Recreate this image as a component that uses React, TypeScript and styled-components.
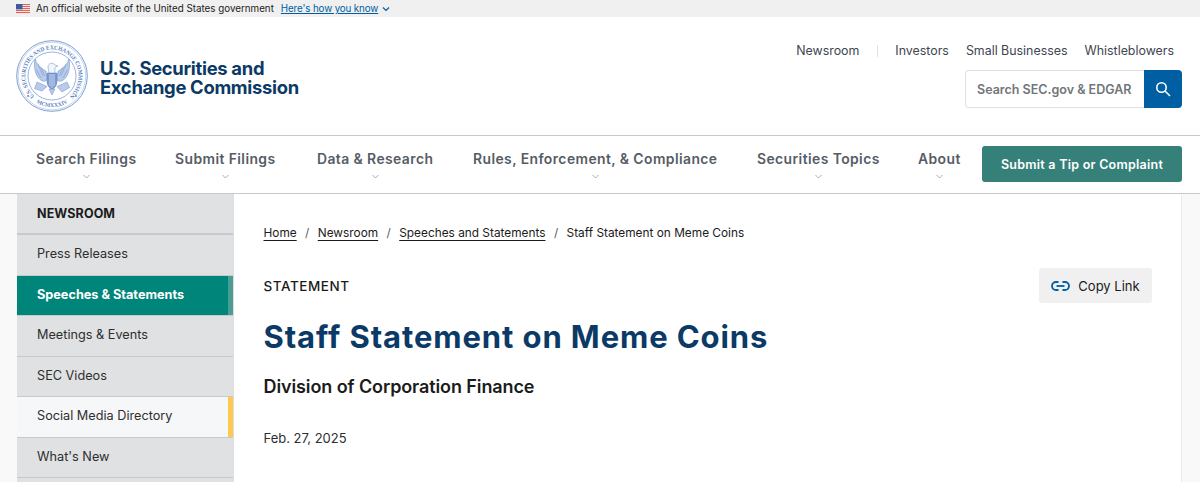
import React from "react";
import styled, { createGlobalStyle } from "styled-components";

const Global = createGlobalStyle`
  html, body { margin: 0; padding: 0; background: #fff; overflow: hidden; }
  body { font-family: Inter, "Liberation Sans", sans-serif; color: #1b1b1b; }
  a { color: inherit; }
`;

const Page = styled.div`
  width: 1200px;
  height: 482px;
  overflow: hidden;
`;

const Banner = styled.div`
  height: 17px;
  background: #f0f0f0;
  display: flex;
  align-items: center;
  padding-left: 16px;
  font-size: 9.8px;
  color: #1b1b1b;
`;
const BannerText = styled.span`
  margin-left: 6px;
`;
const BannerLink = styled.a`
  margin-left: 7px;
  color: #005ea2;
  letter-spacing: -0.13px;
  text-decoration: underline;
`;
const BannerChevron = styled.svg`
  margin-left: 4px;
  width: 8px;
  height: 6px;
`;

const Masthead = styled.header`
  height: 118px;
  display: flex;
  justify-content: space-between;
  border-bottom: 1px solid #c9c9c9;
`;
const Brand = styled.div`
  display: flex;
  align-items: center;
  padding-left: 16px;
  gap: 12px;
`;
const BrandName = styled.div`
  font-family: Inter, sans-serif;
  font-weight: 700;
  font-size: 18.4px;
  line-height: 19px;
  letter-spacing: -0.3px;
  color: #0b3a66;
  margin-top: 3px;
`;
const Utility = styled.div`
  display: flex;
  flex-direction: column;
  align-items: flex-end;
  padding: 26px 18px 0 0;
`;
const UtilityLinks = styled.nav`
  display: flex;
  align-items: center;
  padding-right: 8px;
  font-size: 12.4px;
  line-height: 16px;
  color: #3d4551;
`;
const UtilityLink = styled.span<{ $gap: number }>`
  margin-left: ${(p) => p.$gap}px;
`;
const Divider = styled.span`
  width: 1px;
  height: 12px;
  background: #dfe1e2;
  margin-left: 18px;
`;
const SearchBox = styled.div`
  margin-top: 11px;
  display: flex;
  height: 38px;
`;
const SearchField = styled.div`
  width: 179px;
  box-sizing: border-box;
  border: 1px solid #dfe1e2;
  border-right: 0;
  border-radius: 4px 0 0 4px;
  display: flex;
  align-items: center;
  padding-left: 11px;
  font-size: 12.5px;
  font-weight: 600;
  color: #71767a;
  white-space: nowrap;
`;
const SearchButton = styled.div`
  width: 38px;
  background: #005ea2;
  border-radius: 0 4px 4px 0;
  display: flex;
  align-items: center;
  justify-content: center;
`;

const MainNav = styled.nav`
  height: 57px;
  display: flex;
  align-items: flex-start;
  border-bottom: 1px solid #c9c9c9;
  padding-left: 36px;
`;
const NavItem = styled.div<{ $w: number }>`
  width: ${(p) => p.$w}px;
  flex: none;
  display: flex;
  flex-direction: column;
  align-items: flex-start;
  padding-top: 15px;
`;
const NavLabel = styled.div`
  display: flex;
  flex-direction: column;
  align-items: center;
  font-size: 13.9px;
  line-height: 17px;
  font-weight: 600;
  letter-spacing: 0.42px;
  color: #565c65;
  white-space: nowrap;
`;
const NavChevron = styled.svg`
  width: 7px;
  height: 5px;
  margin-top: 6px;
`;
const TipButton = styled.div`
  width: 200px;
  height: 36px;
  margin-top: 10px;
  margin-left: -1px;
  background: #36807a;
  border-radius: 3px;
  color: #fff;
  font-size: 12.5px;
  font-weight: 600;
  letter-spacing: 0.25px;
  display: flex;
  align-items: center;
  justify-content: center;
`;

const Body = styled.div`
  display: flex;
  height: 288px;
  background: #f9f9f9;
  padding: 0 18px 0 17px;
`;
const Sheet = styled.div`
  flex: 1;
  display: flex;
  background: #fff;
  border-right: 1px solid #ececec;
`;
const Sidebar = styled.aside`
  width: 216px;
  flex: none;
  background: #dfe1e2;
  border-right: 1px solid #dcdee0;
`;
const SideHead = styled.div`
  height: 39px;
  display: flex;
  align-items: center;
  padding-left: 20px;
  font-size: 12.5px;
  font-weight: 700;
  letter-spacing: 0.1px;
  color: #1b1b1b;
  border-bottom: 2px solid #c6cace;
`;
const SideItem = styled.div<{ $kind?: "active" | "hover" }>`
  height: 40.55px;
  box-sizing: border-box;
  display: flex;
  align-items: center;
  padding: 0 0 2px 20px;
  font-size: 12.7px;
  font-weight: ${(p) => (p.$kind === "active" ? 700 : 400)};
  color: ${(p) => (p.$kind === "active" ? "#fff" : "#2e2e2e")};
  background: ${(p) =>
    p.$kind === "active" ? "#00857a" : p.$kind === "hover" ? "#f6f7f9" : "#dfe1e2"};
  border-bottom: 1px solid #c6cace;
  box-shadow: ${(p) =>
    p.$kind === "active"
      ? "inset -5px 0 0 #4a9d92"
      : p.$kind === "hover"
        ? "inset -5px 0 0 #ffc94d"
        : "none"};
`;
const Content = styled.main`
  flex: 1;
  padding: 31px 29px 0 29.5px;
`;
const Crumbs = styled.div`
  display: flex;
  align-items: center;
  font-size: 11.85px;
  line-height: 17px;
  color: #1b1b1b;
`;
const CrumbLink = styled.a`
  text-decoration: underline;
  text-underline-offset: 3px;
`;
const Slash = styled.span`
  margin: 0 8.4px;
  color: #565c65;
`;
const TypeRow = styled.div`
  margin-top: 26px;
  display: flex;
  justify-content: space-between;
  align-items: center;
  height: 35px;
`;
const TypeLabel = styled.div`
  font-size: 13.5px;
  font-weight: 500;
  letter-spacing: 0.55px;
  color: #1b1b1b;
`;
const CopyLink = styled.div`
  width: 113px;
  height: 35px;
  background: #f0f0f0;
  border-radius: 3px;
  display: flex;
  align-items: center;
  justify-content: center;
  gap: 8px;
  font-size: 13px;
  color: #1b1b1b;
`;
const Title = styled.h1`
  margin: 16px 0 0;
  font-size: 31px;
  line-height: 36px;
  font-weight: 700;
  letter-spacing: 0.9px;
  color: #0b3a66;
`;
const Subtitle = styled.h2`
  margin: 21px 0 0;
  font-size: 18px;
  line-height: 22px;
  font-weight: 600;
  letter-spacing: -0.1px;
  color: #1b1b1b;
`;
const DateLine = styled.div`
  margin-top: 31px;
  font-size: 13px;
  line-height: 18px;
  color: #2e2e2e;
`;

const Flag = () => (
  <svg width="14" height="10" viewBox="0 0 14 10" aria-hidden>
    <rect width="14" height="10" fill="#f4f4f4" />
    {[0, 2, 4, 6, 8].map((y) => (
      <rect key={y} y={y} width="14" height="1.1" fill="#e0625a" />
    ))}
    <rect width="6.5" height="5.4" fill="#3f5a9c" />
  </svg>
);

const Seal = () => (
  <svg width="72" height="72" viewBox="0 0 72 72" aria-hidden>
    <defs>
      <path id="sealTop" d="M18.9 56.3 A26.5 26.5 0 1 1 53.1 56.3" />
      <path id="sealBottom" d="M20.5 62.8 A31 31 0 0 0 51.5 62.8" />
    </defs>
    <circle cx="36" cy="36" r="35.3" fill="#fff" stroke="#6f93cf" strokeWidth="0.9" />
    <circle cx="36" cy="36" r="33.8" fill="none" stroke="#8fabd9" strokeWidth="0.5" />
    <circle cx="36" cy="36" r="24" fill="none" stroke="#6f93cf" strokeWidth="0.7" />
    <text fontFamily="Liberation Serif, serif" fontSize="6" fontWeight="700" fill="#5b82c4">
      <textPath href="#sealTop" startOffset="50%" textAnchor="middle" textLength="128" lengthAdjust="spacingAndGlyphs">
        U.S. SECURITIES AND EXCHANGE COMMISSION
      </textPath>
    </text>
    <text fontFamily="Liberation Serif, serif" fontSize="5.6" fontWeight="700" fill="#5b82c4">
      <textPath href="#sealBottom" startOffset="50%" textAnchor="middle">
        MCMXXXIV
      </textPath>
    </text>
    <circle cx="12" cy="56" r="0.9" fill="#5b82c4" />
    <circle cx="60" cy="56" r="0.9" fill="#5b82c4" />
    <g fill="#b9cbea" stroke="#5b82c4" strokeWidth="0.45">
      <path d="M30 31 C26 29 21 25 19 19 C17.5 27 19 35 24 39.5 C26 41.5 29 42 31 40 Z" />
      <path d="M42 31 C46 29 51 25 53 19 C54.5 27 53 35 48 39.5 C46 41.5 43 42 41 40 Z" />
      <path d="M31 33 H41 V42 C41 46 38 48 36 50 C34 48 31 46 31 42 Z" fill="#7d9ad2" />
      <path d="M32 27 C32 23 37 22 39 25 L42 26 L39 27.5 L39 33 H33 Z" fill="#f1f4fa" />
      <path d="M21 42 L31 46.5 L26 51 L18.5 48.5 Z" />
      <path d="M51 42 L41 46.5 L46 52 L53.5 47.5 Z" />
      <path d="M33 49 L36 55 L39 49 Z" />
    </g>
    <path d="M22 24 L27 36 M25 27 L29 36 M50 24 L45 36 M47 27 L43 36 M20.5 30 L25 38 M51.5 30 L47 38" stroke="#5b82c4" strokeWidth="0.4" fill="none" />
    <path d="M34 34 V46 M36 34 V48 M38 34 V46" stroke="#fff" strokeWidth="0.6" />
  </svg>
);

const nav: [string, number][] = [
  ["Search Filings", 139],
  ["Submit Filings", 142],
  ["Data & Research", 156],
  ["Rules, Enforcement, & Compliance", 284],
  ["Securities Topics", 161],
  ["About", 65],
];

const side = ["Press Releases", "Speeches & Statements", "Meetings & Events", "SEC Videos", "Social Media Directory", "What's New"];

export default function App() {
  return (
    <Page>
      <Global />
      <Banner>
        <Flag />
        <BannerText>An official website of the United States government</BannerText>
        <BannerLink>Here's how you know</BannerLink>
        <BannerChevron viewBox="0 0 8 6">
          <path d="M1 1.5 L4 4.5 L7 1.5" fill="none" stroke="#005ea2" strokeWidth="1.2" />
        </BannerChevron>
      </Banner>
      <Masthead>
        <Brand>
          <Seal />
          <BrandName>
            U.S. Securities and
            <br />
            Exchange Commission
          </BrandName>
        </Brand>
        <Utility>
          <UtilityLinks>
            <UtilityLink $gap={0}>Newsroom</UtilityLink>
            <Divider />
            <UtilityLink $gap={17}>Investors</UtilityLink>
            <UtilityLink $gap={17}>Small Businesses</UtilityLink>
            <UtilityLink $gap={17}>Whistleblowers</UtilityLink>
          </UtilityLinks>
          <SearchBox>
            <SearchField>Search SEC.gov &amp; EDGAR</SearchField>
            <SearchButton>
              <svg width="16" height="16" viewBox="0 0 16 16" fill="none" stroke="#fff" strokeWidth="1.6">
                <circle cx="6.5" cy="6.5" r="4.7" />
                <path d="M10 10 L15 15" />
              </svg>
            </SearchButton>
          </SearchBox>
        </Utility>
      </Masthead>
      <MainNav>
        {nav.map(([label, w]) => (
          <NavItem key={label} $w={w}>
            <NavLabel>
              {label}
              <NavChevron viewBox="0 0 7 5">
                <path d="M0.5 1 L3.5 4 L6.5 1" fill="none" stroke="#9ea3a7" strokeWidth="0.9" />
              </NavChevron>
            </NavLabel>
          </NavItem>
        ))}
        <TipButton>Submit a Tip or Complaint</TipButton>
      </MainNav>
      <Body>
        <Sheet>
          <Sidebar>
            <SideHead>NEWSROOM</SideHead>
            {side.map((s) => (
              <SideItem
                key={s}
                $kind={s.startsWith("Speeches") ? "active" : s.startsWith("Social") ? "hover" : undefined}
              >
                {s}
              </SideItem>
            ))}
          </Sidebar>
          <Content>
            <Crumbs>
              <CrumbLink>Home</CrumbLink>
              <Slash>/</Slash>
              <CrumbLink>Newsroom</CrumbLink>
              <Slash>/</Slash>
              <CrumbLink>Speeches and Statements</CrumbLink>
              <Slash>/</Slash>
              <span>Staff Statement on Meme Coins</span>
            </Crumbs>
            <TypeRow>
              <TypeLabel>STATEMENT</TypeLabel>
              <CopyLink>
                <svg width="19" height="10" viewBox="0 0 19 10" fill="none" stroke="#005ea2" strokeWidth="1.8">
                  <path d="M7.5 1 H5 A4 4 0 0 0 5 9 H7.5" />
                  <path d="M11.5 1 H14 A4 4 0 0 1 14 9 H11.5" />
                  <path d="M5.5 5 H13.5" />
                </svg>
                Copy Link
              </CopyLink>
            </TypeRow>
            <Title>Staff Statement on Meme Coins</Title>
            <Subtitle>Division of Corporation Finance</Subtitle>
            <DateLine>Feb. 27, 2025</DateLine>
          </Content>
        </Sheet>
      </Body>
    </Page>
  );
}
